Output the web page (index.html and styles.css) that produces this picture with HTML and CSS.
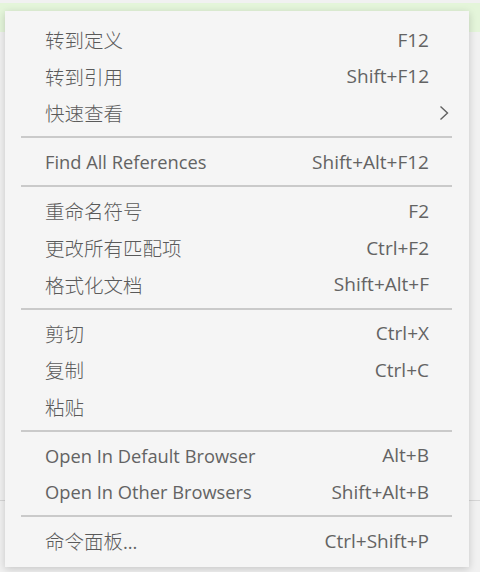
FILE: index.html
```html
<!DOCTYPE html>
<html lang="zh-CN">
<head>
<meta charset="utf-8">
<title>Context menu</title>
<link rel="stylesheet" href="styles.css">
</head>
<body>
<div class="band"></div>
<div class="rule"></div>
<div class="menu">
  <div class="item"><span class="label cjk">转到定义</span><span class="key">F12</span></div>
  <div class="item"><span class="label cjk">转到引用</span><span class="key">Shift+F12</span></div>
  <div class="item"><span class="label cjk">快速查看</span><span class="key"></span>
    <svg class="chev" width="10" height="16" viewBox="0 0 10 16"><polyline points="1.5,1.5 8.5,8 1.5,14.5" fill="none" stroke="#616161" stroke-width="1.4"/></svg>
  </div>
  <div class="sep"></div>
  <div class="item"><span class="label">Find All References</span><span class="key">Shift+Alt+F12</span></div>
  <div class="sep"></div>
  <div class="item"><span class="label cjk">重命名符号</span><span class="key">F2</span></div>
  <div class="item"><span class="label cjk">更改所有匹配项</span><span class="key">Ctrl+F2</span></div>
  <div class="item"><span class="label cjk">格式化文档</span><span class="key">Shift+Alt+F</span></div>
  <div class="sep"></div>
  <div class="item"><span class="label cjk">剪切</span><span class="key">Ctrl+X</span></div>
  <div class="item"><span class="label cjk">复制</span><span class="key">Ctrl+C</span></div>
  <div class="item"><span class="label cjk">粘贴</span><span class="key"></span></div>
  <div class="sep"></div>
  <div class="item"><span class="label">Open In Default Browser</span><span class="key">Alt+B</span></div>
  <div class="item"><span class="label">Open In Other Browsers</span><span class="key">Shift+Alt+B</span></div>
  <div class="sep"></div>
  <div class="item"><span class="label cjk">命令面板<span class="dots">...</span></span><span class="key">Ctrl+Shift+P</span></div>
</div>
</body>
</html>
```
FILE: styles.css
```css
html, body {
  margin: 0;
  padding: 0;
}
body {
  width: 480px;
  height: 572px;
  background: #f1f1f1;
  position: relative;
  overflow: hidden;
  font-family: "Open Sans", "Noto Sans CJK SC", sans-serif;
  color: #636363;
}
.band {
  height: 29px;
  margin-top: 3px;
  background: #e4f5da;
}
.rule {
  position: absolute;
  left: 0;
  right: 0;
  top: 500px;
  height: 1px;
  background: #d6d6d6;
}
.menu {
  position: absolute;
  left: 5px;
  top: 11px;
  width: 464px;
  box-sizing: border-box;
  padding: 10.5px 0 7.7px;
  background: #f5f5f5;
  box-shadow: 0 2px 8px rgba(0, 0, 0, 0.18);
}
.item {
  height: 36.6px;
  display: flex;
  align-items: center;
  padding: 0 40px;
  position: relative;
  font-size: 18.3px;
}
.label {
  flex: 1;
  white-space: nowrap;
}
.label.cjk {
  font-family: "Noto Sans CJK SC", sans-serif;
  font-weight: 300;
  font-size: 19.5px;
  color: #5a5a5a;
}
.dots {
  font-family: "Open Sans", sans-serif;
  font-weight: 400;
  font-size: 18.3px;
  color: #636363;
}
.key {
  white-space: nowrap;
  font-size: 19px;
}
.chev {
  position: absolute;
  right: 20px;
  top: 10px;
}
.sep {
  height: 12.4px;
  display: flex;
  align-items: center;
  padding: 0 17px 0 16px;
}
.sep::before {
  content: "";
  flex: 1;
  height: 2px;
  background: #cacaca;
}
```
